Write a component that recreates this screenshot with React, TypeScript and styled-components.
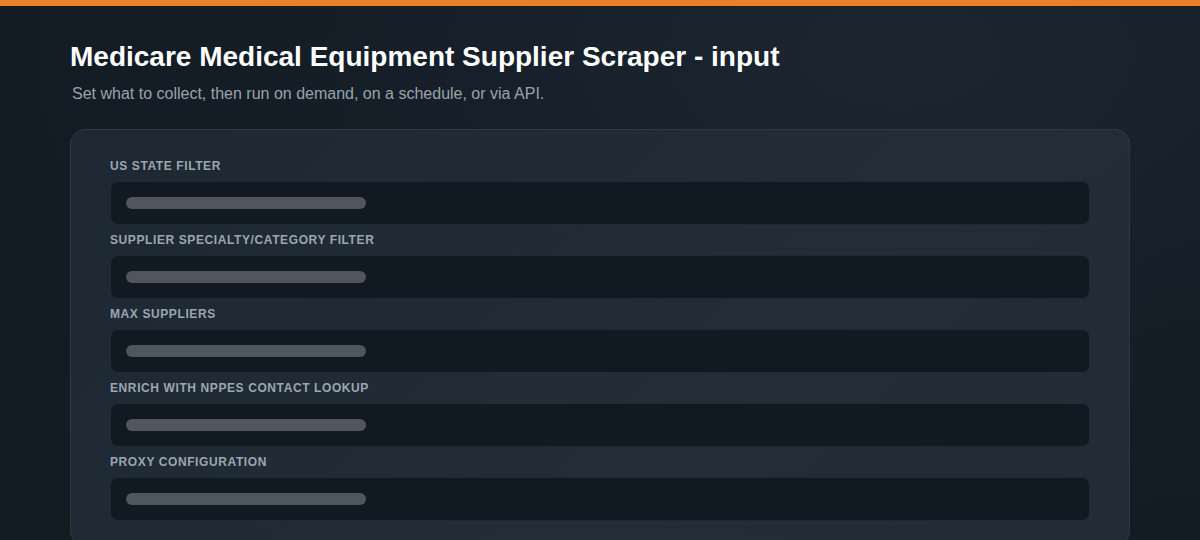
import React from 'react';
import styled, { createGlobalStyle } from 'styled-components';

const GlobalStyle = createGlobalStyle`
  html, body {
    margin: 0;
    padding: 0;
    background: #131b24;
  }

  body {
    font-family: "Liberation Sans", Arial, sans-serif;
  }
`;

const fields = [
  'US State Filter',
  'Supplier Specialty/Category Filter',
  'Max Suppliers',
  'Enrich with NPPES Contact Lookup',
  'Proxy Configuration',
];

const App = () => {
  return (
    <Page>
      <GlobalStyle />
      <TopBar />
      <Content>
        <Title>Medicare Medical Equipment Supplier Scraper - input</Title>
        <Subtitle>
          Set what to collect, then run on demand, on a schedule, or via API.
        </Subtitle>

        <Card>
          {fields.map((name) => (
            <Field key={name}>
              <Label>{name}</Label>
              <InputBox>
                <Placeholder />
              </InputBox>
            </Field>
          ))}
        </Card>
      </Content>
    </Page>
  );
};

export default App;

const Page = styled.div`
  width: 1200px;
  height: 540px;
  overflow: hidden;
  background: radial-gradient(ellipse at 75% 10%, #1b2631 0%, #141c25 55%, #121a22 100%);
`;

const TopBar = styled.div`
  height: 6px;
  background-color: #ea8128;
`;

const Content = styled.div`
  padding: 35px 70px 0;
`;

const Title = styled.h1`
  margin: 0;
  color: #ffffff;
  font-size: 28px;
  font-weight: bold;
  line-height: 32px;
`;

const Subtitle = styled.p`
  margin: 11px 0 0 2px;
  color: #9aa3ad;
  font-size: 16px;
  line-height: 20px;
`;

const Card = styled.div`
  margin-top: 25px;
  padding: 28px 39px 24px;
  background: linear-gradient(135deg, #1e2833 0%, #222d38 60%, #212c37 100%);
  border: 1px solid rgba(255, 255, 255, 0.07);
  border-radius: 16px;
  display: flex;
  flex-direction: column;
  gap: 7px;
`;

const Field = styled.div`
  display: flex;
  flex-direction: column;
`;

const Label = styled.label`
  color: #9ca6b1;
  font-size: 12px;
  font-weight: bold;
  line-height: 16px;
  text-transform: uppercase;
  letter-spacing: 0.6px;
  margin-bottom: 7px;
`;

const InputBox = styled.div`
  height: 42px;
  background-color: #111922;
  border: 1px solid rgba(255, 255, 255, 0.07);
  border-radius: 8px;
  display: flex;
  align-items: center;
  padding-left: 15px;
`;

const Placeholder = styled.div`
  width: 240px;
  height: 12px;
  border-radius: 6px;
  background-color: #50565f;
`;
